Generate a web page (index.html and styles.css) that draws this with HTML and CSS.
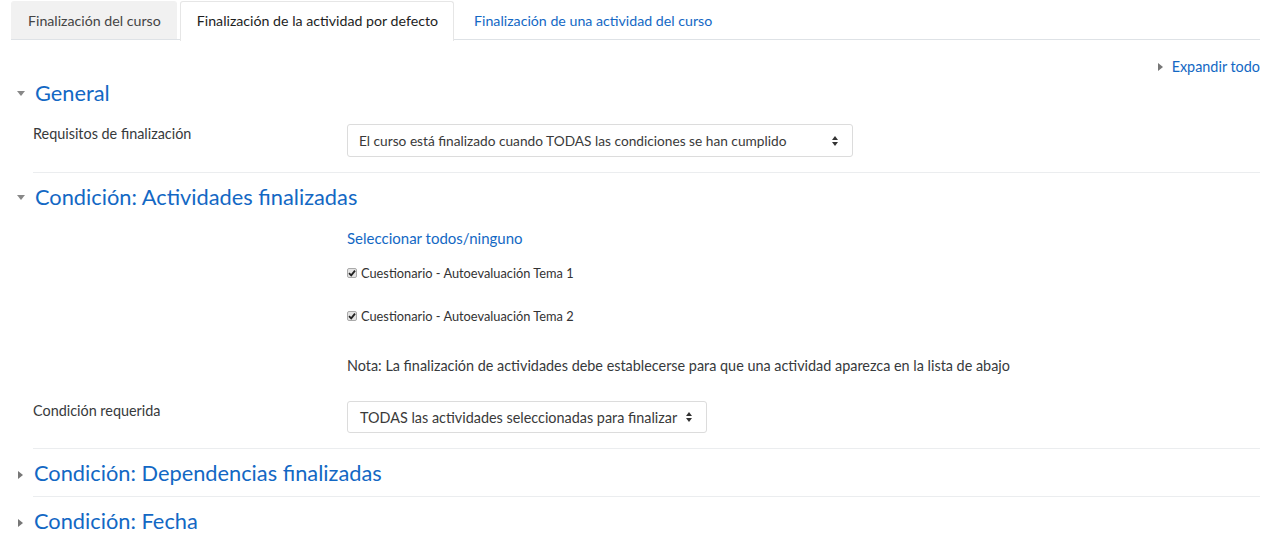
FILE: index.html
```html
<!DOCTYPE html>
<html>
<head>
    <title>Finalización del curso</title>
    <meta name="viewport" content="width=device-width, initial-scale=1">
    <link rel="stylesheet" href="styles.css">
</head>
<body>

<div class="page">

<ul class="tabs">
    <li class="tab tab-grey">Finalización del curso</li>
    <li class="tab tab-active">Finalización de la actividad por defecto</li>
    <li class="tab"><a href="#">Finalización de una actividad del curso</a></li>
</ul>

<div class="collapse-all"><a href="#"><span class="caret-right"></span>Expandir todo</a></div>

<div class="section first">
    <h3 class="legend"><span class="caret-down"></span>General</h3>
    <div class="row">
        <label class="row-label">Requisitos de finalización</label>
        <div class="row-field">
            <div class="select select-wide">El curso está finalizado cuando TODAS las condiciones se han cumplido<span class="arrows"></span></div>
        </div>
    </div>
</div>

<div class="section">
    <h3 class="legend"><span class="caret-down"></span>Condición: Actividades finalizadas</h3>
    <div class="row">
        <div class="row-label"></div>
        <div class="row-field">
            <a href="#" class="select-all">Seleccionar todos/ninguno</a>
            <label class="check"><span class="box"><svg width="8" height="8" viewBox="0 0 8 8"><path d="M1 4.2 L3.2 6.3 L7 1.6" fill="none" stroke="#222" stroke-width="1.8"/></svg></span>Cuestionario - Autoevaluación Tema 1</label>
            <label class="check"><span class="box"><svg width="8" height="8" viewBox="0 0 8 8"><path d="M1 4.2 L3.2 6.3 L7 1.6" fill="none" stroke="#222" stroke-width="1.8"/></svg></span>Cuestionario - Autoevaluación Tema 2</label>
            <p class="note">Nota: La finalización de actividades debe establecerse para que una actividad aparezca en la lista de abajo</p>
        </div>
    </div>
    <div class="row">
        <label class="row-label">Condición requerida</label>
        <div class="row-field">
            <div class="select select-small">TODAS las actividades seleccionadas para finalizar<span class="arrows"></span></div>
        </div>
    </div>
</div>

<div class="section">
    <h3 class="legend"><span class="caret-right"></span>Condición: Dependencias finalizadas</h3>
</div>

<div class="section last">
    <h3 class="legend"><span class="caret-right"></span>Condición: Fecha</h3>
</div>

</div>

</body>
</html>
```

FILE: styles.css
```css
body { margin: 0; font-family: Lato, "Open Sans", sans-serif; font-size: 14.4px; color: #373a3c; background: #fff; }
a { color: #1368c4; text-decoration: none; }
.page { padding: 0 5px 0 11px; }

.tabs { list-style: none; margin: 0; padding: 1px 0 0; display: flex; border-bottom: 1px solid #dee2e6; height: 38px; font-size: 14.2px; }
.tab { padding: 0 15px 0 16px; line-height: 38px; margin-right: 3px; border: 1px solid transparent; border-bottom: none; border-radius: 3px 3px 0 0; color: #444; }
.tab-grey { background: #f1f1f1; border-color: #f1f1f1; }
.tab-active { background: #fff; border-color: #e6e6e6; height: 39px; margin-bottom: -1px; color: #1d1d1d; }

.collapse-all { text-align: right; margin-top: 16px; line-height: 20px; }
.collapse-all a { display: inline-flex; align-items: center; }
.collapse-all .caret-right { margin-right: 9px; }

.caret-right { display: inline-block; width: 0; height: 0; border-top: 4.5px solid transparent; border-bottom: 4.5px solid transparent; border-left: 5px solid #777; }
.caret-down { display: inline-block; width: 0; height: 0; border-left: 4px solid transparent; border-right: 4px solid transparent; border-top: 5px solid #888; margin-right: 10px; vertical-align: middle; position: relative; top: -2px; }

.section { margin-left: 22px; border-bottom: 1px solid #ebedef; }
.section.last { border-bottom: none; }
.legend { margin: 0 0 0 -16px; font-size: 21.8px; font-weight: normal; color: #1368c4; line-height: 28px; padding: 10px 0 9px; }
.legend .caret-right { margin: 0 11px 0 1px; position: relative; top: -2px; }
.section.first .legend { padding-top: 2px; }

.row { display: grid; grid-template-columns: 314px 1fr; padding: 8px 0 15px; }
.row-label { line-height: 20px; }
.select { display: inline-flex; align-items: center; justify-content: space-between; border: 1px solid #dcdcdc; border-radius: 3px; height: 33px; box-sizing: border-box; padding: 0 13px 0 11px; color: #3a3a3a; }
.select-wide { width: 506px; font-size: 13.7px; }
.select-small { width: 360px; height: 32px; padding-left: 12px; }
.arrows { display: inline-block; width: 7px; height: 10px; position: relative; }
.arrows::before, .arrows::after { content: ""; position: absolute; left: 0; border-left: 3.5px solid transparent; border-right: 3.5px solid transparent; }
.arrows::before { top: 0; border-bottom: 4px solid #333; }
.arrows::after { bottom: 0; border-top: 4px solid #333; }

.select-all { display: block; line-height: 20px; font-size: 15px; }
.check { display: flex; align-items: center; line-height: 20px; margin-top: 15px; font-size: 12.8px; color: #333; }
.check + .check { margin-top: 23px; }
.box { display: inline-flex; align-items: center; justify-content: center; width: 10px; height: 10px; box-sizing: border-box; background: #e4e4e4; border: 1px solid #aaa; border-radius: 2px; margin-right: 4px; }
.note { margin: 30px 0 0; line-height: 20px; }
.row + .row { padding-top: 10px; }
```
